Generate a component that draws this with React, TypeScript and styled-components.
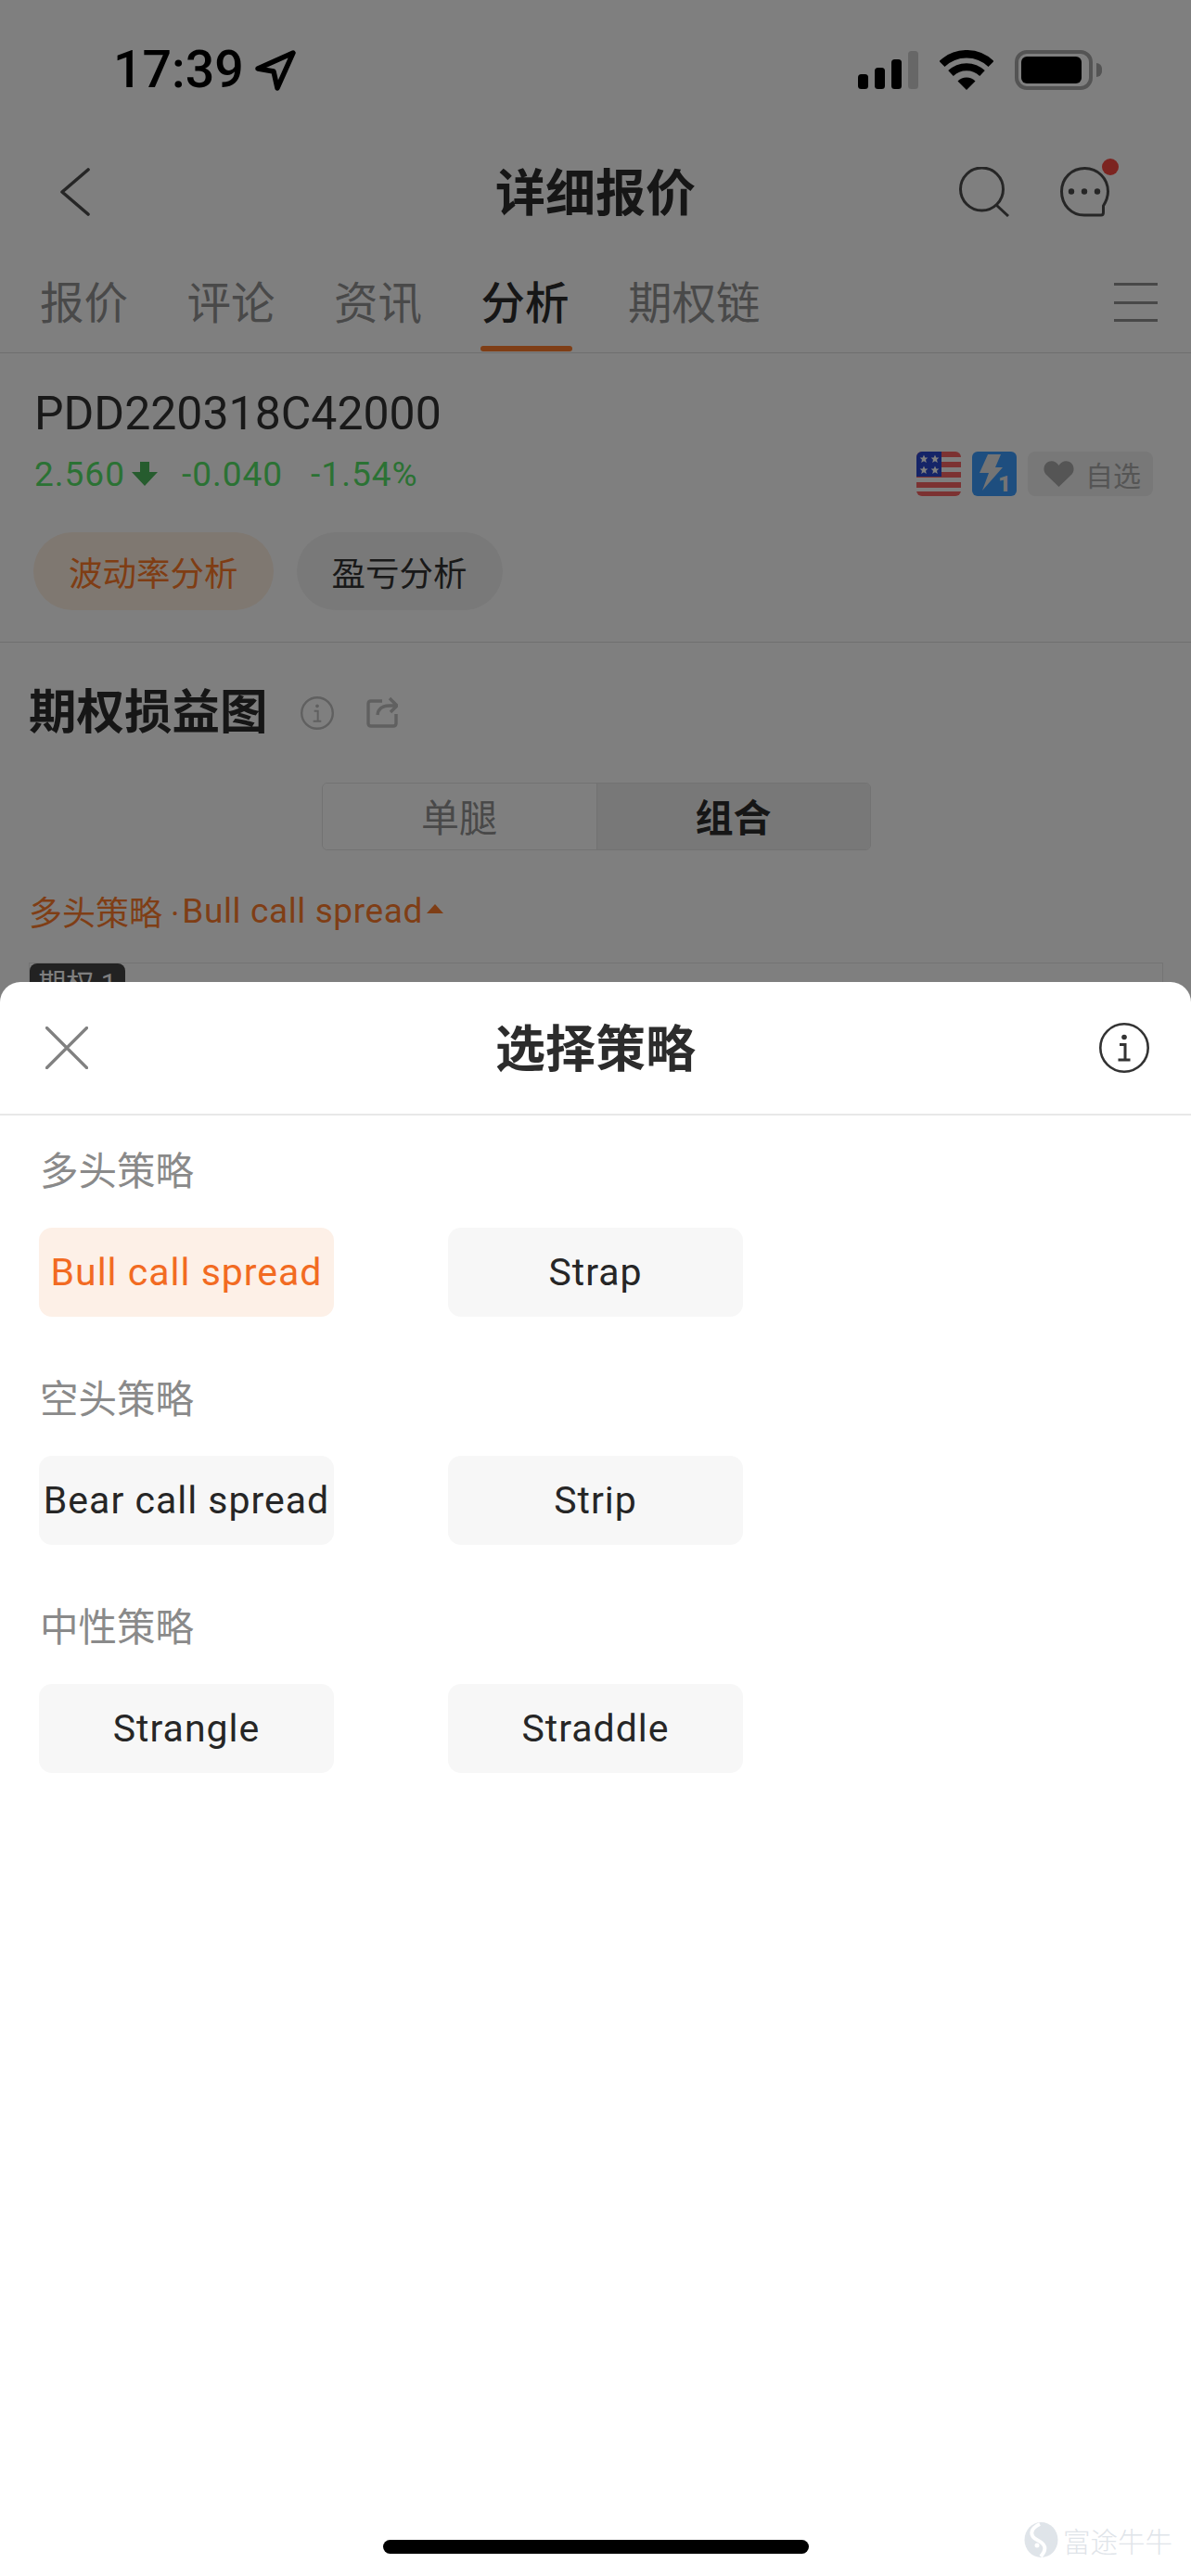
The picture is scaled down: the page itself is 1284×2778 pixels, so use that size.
import styled, { createGlobalStyle } from 'styled-components';

const FONT = `Roboto, "Noto Sans CJK SC", sans-serif`;

const GlobalStyle = createGlobalStyle`
  html, body {
    margin: 0;
    padding: 0;
    background: #fff;
  }
  * {
    box-sizing: border-box;
  }
`;

// --- Screen ---
const Screen = styled.div`
  position: relative;
  width: 1284px;
  height: 2778px;
  overflow: hidden;
  background: #fff;
  font-family: ${FONT};
  color: #282828;
`;

// --- Status bar ---
const StatusBar = styled.div`
  height: 152px;
  padding: 54px 106px 0 122px;
  display: flex;
  justify-content: space-between;
  align-items: flex-start;
  color: #000;
`;

const TimeGroup = styled.div`
  display: flex;
  align-items: center;
  gap: 11px;
  height: 44px;
`;

const Time = styled.span`
  font-size: 55.5px;
  font-weight: 500;
  line-height: 44px;
`;

const StatusIcons = styled.div`
  display: flex;
  align-items: flex-start;
  gap: 23px;
`;

const Battery = styled.div`
  position: relative;
  width: 84px;
  height: 43px;
  border: 4px solid #a8a8a8;
  border-radius: 13px;
  padding: 3px;

  &::before {
    content: '';
    display: block;
    width: 65px;
    height: 29px;
    background: #000;
    border-radius: 6px;
  }

  &::after {
    content: '';
    position: absolute;
    right: -14px;
    top: 10px;
    width: 6px;
    height: 15px;
    background: #a8a8a8;
    border-radius: 0 8px 8px 0;
  }
`;

// --- Nav bar ---
const NavBar = styled.div`
  height: 110px;
  padding: 0 65px;
  display: grid;
  grid-template-columns: 1fr auto 1fr;
  align-items: center;
`;

const NavTitle = styled.div`
  padding-top: 6px;
  font-size: 54px;
  font-weight: 700;
  line-height: 60px;
  color: #2c2c2c;
`;

const NavActions = styled.div`
  display: flex;
  justify-content: flex-end;
  align-items: center;
  gap: 55px;
  padding-right: 22px;
`;

const MessageButton = styled.div`
  position: relative;
  width: 54px;
  height: 54px;
`;

const RedDot = styled.span`
  position: absolute;
  top: -9px;
  right: -9px;
  width: 18px;
  height: 18px;
  border-radius: 50%;
  background: #f84840;
`;

// --- Tabs ---
const TabBar = styled.div`
  height: 119px;
  padding: 0 36px 0 43px;
  display: flex;
  align-items: center;
  gap: 63.5px;
  border-bottom: 1px solid #dedede;
`;

const Tab = styled.div<{ $active?: boolean }>`
  position: relative;
  height: 60px;
  margin-top: 14px;
  font-size: 47.5px;
  line-height: 60px;
  font-weight: ${({ $active }) => ($active ? 500 : 400)};
  color: ${({ $active }) => ($active ? '#2c2c2c' : '#929292')};
`;

const TabIndicator = styled.span`
  position: absolute;
  left: -1px;
  right: -3px;
  bottom: -21px;
  height: 6px;
  border-radius: 3px;
  background: #ff7d2c;
`;

const TabMenu = styled.div`
  margin-left: auto;
  width: 47px;
  height: 42px;
  display: flex;
  flex-direction: column;
  justify-content: space-between;
  margin-top: 10px;

  span {
    display: block;
    height: 3px;
    background: #909090;
  }
`;

// --- Quote section ---
const QuoteSection = styled.div`
  height: 312px;
  padding: 35px 41px 0 37px;
  border-bottom: 1px solid #dedede;
`;

const OptionName = styled.div`
  font-size: 50px;
  line-height: 60px;
  color: #333;
`;

const QuoteRow = styled.div`
  height: 70px;
  display: flex;
  align-items: center;
  justify-content: space-between;
`;

const Prices = styled.div`
  display: flex;
  align-items: center;
  font-size: 37px;
`;

const PriceValue = styled.span<{ $gap?: number }>`
  margin-left: ${({ $gap }) => $gap ?? 0}px;
  color: #56e468;
  letter-spacing: 1px;
`;

const Badges = styled.div`
  display: flex;
  align-items: center;
  gap: 12px;
`;

const FavButton = styled.div`
  width: 135px;
  height: 48px;
  padding-left: 17px;
  display: flex;
  align-items: center;
  gap: 12px;
  border-radius: 8px;
  background: #f0f0f0;
  font-size: 30px;
  color: #aaa;
`;

const PillRow = styled.div`
  display: flex;
  gap: 25px;
  margin: 28px 0 0 -1px;
`;

const Pill = styled.div<{ $active?: boolean }>`
  height: 84px;
  padding: 0 38px;
  border-radius: 42px;
  display: flex;
  align-items: center;
  font-size: 36.5px;
  background: ${({ $active }) => ($active ? '#fff0e2' : '#f2f2f2')};
  color: ${({ $active }) => ($active ? '#ff7a28' : '#333')};
`;

// --- Chart section ---
const ChartSection = styled.div`
  padding: 46px 30px 0 31px;
`;

const ChartHeading = styled.div`
  height: 60px;
  display: flex;
  align-items: center;
  gap: 35px;
`;

const ChartTitle = styled.div`
  font-size: 51.5px;
  font-weight: 700;
  line-height: 60px;
  color: #2c2c2c;
`;

const Segmented = styled.div`
  width: 592px;
  height: 73px;
  margin: 45px auto 0;
  display: grid;
  grid-template-columns: 1fr 1fr;
  border: 1px solid #e4e4e4;
  border-radius: 6px;
  overflow: hidden;
`;

const Segment = styled.div<{ $active?: boolean }>`
  padding-bottom: 4px;
  display: flex;
  align-items: center;
  justify-content: center;
  font-size: 41px;
  font-weight: ${({ $active }) => ($active ? 700 : 400)};
  color: ${({ $active }) => ($active ? '#2c2c2c' : '#929292')};
  background: ${({ $active }) => ($active ? '#f0f0f0' : '#fff')};
  border-left: ${({ $active }) => ($active ? '1px solid #e4e4e4' : 'none')};
`;

const StrategyRow = styled.div`
  height: 60px;
  margin-top: 35px;
  display: flex;
  align-items: center;
  font-size: 36px;
  color: #ff7d2c;
`;

const StrategyCode = styled.span`
  margin-left: 3px;
  font-size: 37px;
  letter-spacing: 0.6px;
`;

const StrategyCaret = styled.span`
  width: 0;
  height: 0;
  margin: 0 0 4px 4px;
  border-left: 9px solid transparent;
  border-right: 9px solid transparent;
  border-bottom: 10px solid #ff7d2c;
`;

const LegCard = styled.div`
  position: relative;
  height: 300px;
  margin-top: 26px;
  border: 1px solid #e8e8e8;
`;

const LegTag = styled.span`
  position: absolute;
  top: 0;
  left: 0;
  width: 103px;
  height: 40px;
  border-radius: 8px 8px 8px 0;
  background: #444;
  color: #fff;
  font-size: 30px;
  line-height: 44px;
  text-align: center;
`;

// --- Dim layer and sheet ---
const Dim = styled.div`
  position: absolute;
  inset: 0;
  background: rgba(0, 0, 0, 0.5);
`;

const Sheet = styled.div`
  position: absolute;
  left: 0;
  right: 0;
  top: 1059px;
  bottom: 0;
  background: #fff;
  border-radius: 22px 22px 0 0;
`;

const SheetHeader = styled.div`
  height: 144px;
  padding: 0 45px 0 45px;
  display: grid;
  grid-template-columns: 1fr auto 1fr;
  align-items: center;
  border-bottom: 2px solid #e8e8e8;
`;

const SheetClose = styled.div`
  display: flex;
  padding-left: 4px;
`;

const SheetTitle = styled.div`
  padding-top: 6px;
  font-size: 54px;
  font-weight: 700;
  line-height: 60px;
  color: #2c2c2c;
`;

const HeaderEnd = styled.div`
  display: flex;
  justify-content: flex-end;
`;

const Groups = styled.div`
  padding: 30px 42px 0;
`;

const Group = styled.div`
  height: 246px;
`;

const GroupLabel = styled.div`
  height: 60px;
  margin-left: 1px;
  font-size: 41.5px;
  line-height: 62px;
  color: #8a8a8a;
`;

const OptionGrid = styled.div`
  display: grid;
  grid-template-columns: 318px 318px;
  column-gap: 123px;
  margin-top: 31px;
`;

const OptionButton = styled.div<{ $active?: boolean }>`
  height: 96px;
  border-radius: 14px;
  display: flex;
  align-items: center;
  justify-content: center;
  font-size: 41px;
  letter-spacing: 1px;
  white-space: nowrap;
  background: ${({ $active }) => ($active ? '#fdf0e7' : '#f7f7f7')};
  color: ${({ $active }) => ($active ? '#f26b22' : '#262626')};
`;

const HomeIndicator = styled.div`
  position: absolute;
  left: 413px;
  bottom: 24px;
  width: 459px;
  height: 15px;
  border-radius: 8px;
  background: #000;
`;

const Watermark = styled.div`
  position: absolute;
  right: 20px;
  bottom: 18px;
  display: flex;
  align-items: center;
  gap: 5px;
  font-size: 29.5px;
  font-weight: 300;
  color: #dfe4e9;
`;

// --- Icons ---
const LocationIcon = () => (
  <svg width="46" height="44" viewBox="0 0 46 44">
    <path d="M4 20 L42 3 L25 41 L21 23 Z" fill="none" stroke="#000" strokeWidth="5.5" strokeLinejoin="round" />
  </svg>
);

const SignalIcon = () => (
  <svg width="65" height="42" viewBox="0 0 65 42" style={{ marginTop: 1 }}>
    <rect x="0" y="25" width="11" height="16" rx="3.5" fill="#000" />
    <rect x="18" y="18" width="11" height="23" rx="3.5" fill="#000" />
    <rect x="36" y="9" width="11" height="32" rx="3.5" fill="#000" />
    <rect x="54" y="0" width="11" height="41" rx="3.5" fill="#cfcfcf" />
  </svg>
);

const WifiIcon = () => (
  <svg width="58" height="43" viewBox="0 0 58 43">
    <path d="M2.5 15 A38 38 0 0 1 55.5 15" fill="none" stroke="#000" strokeWidth="8.5" />
    <path d="M12 25 A24.5 24.5 0 0 1 46 25" fill="none" stroke="#000" strokeWidth="8" />
    <path d="M29 43 L19.5 33.5 A13.5 13.5 0 0 1 38.5 33.5 Z" fill="#000" />
  </svg>
);

const BackIcon = () => (
  <svg width="32" height="52" viewBox="0 0 32 52">
    <path d="M30 2 L2 26 L30 50" fill="none" stroke="#4c4c4c" strokeWidth="3.6" strokeLinecap="round" strokeLinejoin="round" />
  </svg>
);

const SearchIcon = () => (
  <svg width="54" height="54" viewBox="0 0 54 54">
    <circle cx="24.5" cy="24" r="23" fill="none" stroke="#4c4c4c" strokeWidth="3" />
    <path d="M40 41 L53 53" fill="none" stroke="#4c4c4c" strokeWidth="3" />
  </svg>
);

const MessageIcon = () => (
  <svg width="54" height="54" viewBox="0 0 54 54">
    <path
      d="M26 52 C12 52 1.5 41 1.5 26.5 C1.5 12 12.5 1.5 26.5 1.5 C40.5 1.5 51.5 12.5 51.5 26.5 C51.5 33 49 38 46.5 42 V49 Q46.5 52 44 52 Z"
      fill="none"
      stroke="#4c4c4c"
      strokeWidth="3"
    />
    <circle cx="12" cy="26.5" r="3.2" fill="#4c4c4c" />
    <circle cx="26" cy="26.5" r="3.2" fill="#4c4c4c" />
    <circle cx="40" cy="26.5" r="3.2" fill="#4c4c4c" />
  </svg>
);

const DownArrow = () => (
  <svg width="28" height="28" viewBox="0 0 28 28" style={{ margin: '0 26px 0 7px' }}>
    <path d="M9 1 H19 V12 H28 L14 27 L0 12 H9 Z" fill="#4cb85c" />
  </svg>
);

const FlagIcon = () => (
  <svg width="48" height="48" viewBox="0 0 48 48">
    <defs>
      <clipPath id="flag-clip">
        <rect width="48" height="48" rx="6" />
      </clipPath>
    </defs>
    <g clipPath="url(#flag-clip)">
      <rect width="48" height="48" fill="#fff" />
      {[0, 11, 22, 33, 43].map((y) => (
        <rect key={y} y={y} width="48" height="6" fill="#f86464" />
      ))}
      <rect width="27" height="27" fill="#2a48d0" />
      {[[8, 8], [20, 8], [8, 20], [20, 20]].map(([x, y]) => (
        <path
          key={`${x}-${y}`}
          transform={`translate(${x} ${y})`}
          d="M0 -4.5 L1.3 -1.4 L4.4 -1.4 L2 0.7 L2.8 4 L0 2.2 L-2.8 4 L-2 0.7 L-4.4 -1.4 L-1.3 -1.4 Z"
          fill="#fff"
        />
      ))}
    </g>
  </svg>
);

const LevelIcon = () => (
  <svg width="48" height="48" viewBox="0 0 48 48">
    <rect width="48" height="48" rx="6" fill="#3c9cff" />
    <path d="M17 3 H31 L25 17 H33 L11 42 L18 23 H8 Z" fill="#e8e8e8" />
    <text x="35" y="43" fontFamily="Roboto, sans-serif" fontSize="24" fontWeight="900" fill="#e8e8e8" textAnchor="middle">
      1
    </text>
  </svg>
);

const HeartIcon = () => (
  <svg width="33" height="28" viewBox="0 0 33 28">
    <path d="M16.5 28 L2.5 14.5 C-1 10.5 0 3.5 5 1 C9 -1 14 0.5 16.5 5 C19 0.5 24 -1 28 1 C33 3.5 34 10.5 30.5 14.5 Z" fill="#aaa" />
  </svg>
);

const InfoIcon = ({ size, color, stroke }: { size: number; color: string; stroke: number }) => (
  <svg width={size} height={size} viewBox="0 0 54 54">
    <circle cx="27" cy="27" r={27 - stroke / 2} fill="none" stroke={color} strokeWidth={stroke} />
    <circle cx="27" cy="15.5" r="2.8" fill={color} />
    <path d="M22 23.5 H28 V40 M20.5 40 H33.5" fill="none" stroke={color} strokeWidth="3" />
  </svg>
);

const ShareIcon = () => (
  <svg width="34" height="34" viewBox="0 0 34 34" style={{ marginTop: -2 }}>
    <path
      d="M17 5 H5 Q2 5 2 8 V29 Q2 32 5 32 H29 Q32 32 32 29 V19 M12 20 Q13 10 25 10 H32 M25 2 L33 10 L26 17"
      fill="none"
      stroke="#c0c0c0"
      strokeWidth="3.4"
    />
  </svg>
);

const CloseIcon = () => (
  <svg width="46" height="46" viewBox="0 0 46 46">
    <path d="M1.5 1.5 L44.5 44.5 M44.5 1.5 L1.5 44.5" fill="none" stroke="#808080" strokeWidth="3.2" strokeLinecap="round" />
  </svg>
);

const WatermarkLogo = () => (
  <svg width="37" height="38" viewBox="0 0 37 38">
    <ellipse cx="18.5" cy="19" rx="18" ry="19" fill="#dfe4e9" />
    <path d="M17 2 C6 7 6 15 14 19 C22 23 26 28 18 37" fill="none" stroke="#fff" strokeWidth="4" />
    <circle cx="14" cy="25" r="2.5" fill="#fff" />
  </svg>
);

// --- Data ---
const TABS = ['报价', '评论', '资讯', '分析', '期权链'];

const STRATEGY_GROUPS = [
  { label: '多头策略', options: ['Bull call spread', 'Strap'] },
  { label: '空头策略', options: ['Bear call spread', 'Strip'] },
  { label: '中性策略', options: ['Strangle', 'Straddle'] },
];

export default function App() {
  return (
    <Screen>
      <GlobalStyle />

      <StatusBar>
        <TimeGroup>
          <Time>17:39</Time>
          <LocationIcon />
        </TimeGroup>
        <StatusIcons>
          <SignalIcon />
          <WifiIcon />
          <Battery />
        </StatusIcons>
      </StatusBar>

      <NavBar>
        <BackIcon />
        <NavTitle>详细报价</NavTitle>
        <NavActions>
          <SearchIcon />
          <MessageButton>
            <MessageIcon />
            <RedDot />
          </MessageButton>
        </NavActions>
      </NavBar>

      <TabBar>
        {TABS.map((tab) => (
          <Tab key={tab} $active={tab === '分析'}>
            {tab}
            {tab === '分析' && <TabIndicator />}
          </Tab>
        ))}
        <TabMenu>
          <span />
          <span />
          <span />
        </TabMenu>
      </TabBar>

      <QuoteSection>
        <OptionName>PDD220318C42000</OptionName>
        <QuoteRow>
          <Prices>
            <PriceValue>2.560</PriceValue>
            <DownArrow />
            <PriceValue>-0.040</PriceValue>
            <PriceValue $gap={30}>-1.54%</PriceValue>
          </Prices>
          <Badges>
            <FlagIcon />
            <LevelIcon />
            <FavButton>
              <HeartIcon />
              自选
            </FavButton>
          </Badges>
        </QuoteRow>
        <PillRow>
          <Pill $active>波动率分析</Pill>
          <Pill>盈亏分析</Pill>
        </PillRow>
      </QuoteSection>

      <ChartSection>
        <ChartHeading>
          <ChartTitle>期权损益图</ChartTitle>
          <InfoIcon size={36} color="#c0c0c0" stroke={3.6} />
          <ShareIcon />
        </ChartHeading>
        <Segmented>
          <Segment>单腿</Segment>
          <Segment $active>组合</Segment>
        </Segmented>
        <StrategyRow>
          多头策略 ·<StrategyCode>Bull call spread</StrategyCode>
          <StrategyCaret />
        </StrategyRow>
        <LegCard>
          <LegTag>期权 1</LegTag>
        </LegCard>
      </ChartSection>

      <Dim />

      <Sheet>
        <SheetHeader>
          <SheetClose>
            <CloseIcon />
          </SheetClose>
          <SheetTitle>选择策略</SheetTitle>
          <HeaderEnd>
            <InfoIcon size={54} color="#333" stroke={2.6} />
          </HeaderEnd>
        </SheetHeader>
        <Groups>
          {STRATEGY_GROUPS.map((group) => (
            <Group key={group.label}>
              <GroupLabel>{group.label}</GroupLabel>
              <OptionGrid>
                {group.options.map((option) => (
                  <OptionButton key={option} $active={option === 'Bull call spread'}>
                    {option}
                  </OptionButton>
                ))}
              </OptionGrid>
            </Group>
          ))}
        </Groups>
      </Sheet>

      <HomeIndicator />
      <Watermark>
        <WatermarkLogo />
        富途牛牛
      </Watermark>
    </Screen>
  );
}
